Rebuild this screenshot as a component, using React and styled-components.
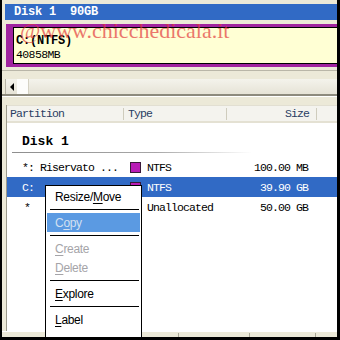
import React from 'react';
import styled, { createGlobalStyle } from 'styled-components';

const Global = createGlobalStyle`
  html, body { margin: 0; padding: 0; background: #000; }
  #root { width: 340px; height: 340px; }
`;

const Frame = styled.div`
  position: relative;
  width: 340px;
  height: 340px;
  box-sizing: border-box;
  border-left: 2px solid #000;
  border-right: 3px solid #000;
  border-bottom: 3px solid #000;
  background: #ece9d8;
  overflow: hidden;
  display: flex;
  flex-direction: column;
`;

const MapArea = styled.div`
  display: flex;
  flex-direction: column;
  padding-top: 4px;
`;

const DiskBar = styled.div`
  margin-left: 3px;
  height: 16px;
  line-height: 16px;
  background: #316ac5;
  color: #fff;
  font-family: "Liberation Mono", monospace;
  font-weight: bold;
  font-size: 12px;
  letter-spacing: -0.2px;
  padding-left: 9px;
  white-space: pre;
`;

const PartitionBox = styled.div`
  margin-top: 4px;
  margin-left: 4px;
  height: 43px;
  box-sizing: border-box;
  border-top: 3px solid #a0239f;
  border-bottom: 3px solid #a0239f;
  border-left: 7px solid #a0239f;
  display: flex;
`;

const PartitionInner = styled.div`
  flex: 1;
  border: 1px solid #000;
  border-right: none;
  background: #ffffd4;
  padding: 6px 0 0 2px;
  font-family: "Liberation Mono", monospace;
  line-height: 14px;
  color: #000;
`;

const PartLabel = styled.div`
  font-size: ${p => p.$bold ? '12px' : '11.5px'};
  font-weight: ${p => p.$bold ? 'bold' : 'normal'};
  letter-spacing: ${p => p.$bold ? '-0.2px' : '-0.6px'};
`;

const Watermark = styled.div`
  position: absolute;
  left: 18px;
  top: 20px;
  font-family: "Liberation Serif", "Times New Roman", serif;
  font-size: 22px;
  line-height: 22px;
  color: #e2383a;
  opacity: 0.68;
  pointer-events: none;
`;

const ScrollArea = styled.div`
  margin-top: 3px;
  border-top: 1px solid #b9b6a8;
  padding-top: 8px;
  border-bottom: 2px solid #8d8a7d;
  box-shadow: 0 1px 0 #fff;
`;

const Scrollbar = styled.div`
  margin-left: 3px;
  height: 15px;
  display: flex;
  background: linear-gradient(#f4f3ec, #e6e3d6);
`;

const ArrowBtn = styled.div`
  width: 11px;
  display: flex;
  align-items: center;
  justify-content: center;
  border-left: 1px solid #b7b4a6;
  &::before {
    content: "";
    width: 0;
    height: 0;
    border-top: 4px solid transparent;
    border-bottom: 4px solid transparent;
    border-right: 4px solid #000;
  }
`;

const Thumb = styled.div`
  width: 11px;
  background: #fdfdfb;
  border-right: 1px solid #d5d2c4;
`;

const ListPanel = styled.div`
  flex: 1;
  margin-top: 9px;
  margin-left: 4px;
  border-left: 1px solid #9c9a8c;
  background: #fff;
  display: flex;
  flex-direction: column;
  min-height: 0;
  font-family: "Liberation Mono", monospace;
  font-size: 11.5px;
  letter-spacing: -0.9px;
`;

const Columns = styled.div`
  display: grid;
  grid-template-columns: 117px 103px 90px 1fr;
  align-items: center;
`;

const HeaderRow = styled(Columns)`
  height: 18px;
  background: #f4f3ee;
  border-top: 1px solid #e2dfd2;
  border-bottom: 2px solid #e4e1d3;
  box-sizing: border-box;
  color: #2a3d63;
`;

const HeaderCell = styled.div`
  height: 12px;
  line-height: 12px;
  border-right: ${p => p.$last ? 'none' : '1px solid #cfccbd'};
  padding: ${p => p.$right ? '0 7px 0 0' : `0 0 0 ${p.$pad || 3}px`};
  text-align: ${p => p.$right ? 'right' : 'left'};
`;

const ListBody = styled.div`
  flex: 1;
  display: flex;
  flex-direction: column;
`;

const GroupTitle = styled.div`
  height: 29px;
  box-sizing: border-box;
  padding: 12px 0 0 15px;
  line-height: 14px;
  font-size: 13px;
  font-weight: bold;
  letter-spacing: 0;
  color: #000;
`;

const GroupRule = styled.div`
  margin-left: 5px;
  width: 240px;
  height: 1px;
  background: linear-gradient(to right, #8e8e8e 0%, #a8a8a8 60%, #ffffff 100%);
  margin-bottom: 4px;
`;

const Row = styled(Columns)`
  height: 20px;
  background: ${p => p.$selected ? '#316ac5' : 'transparent'};
  color: ${p => p.$selected ? '#fff' : '#000'};
`;

const Cell = styled.div`
  padding-left: ${p => p.$pad || 0}px;
  padding-right: ${p => p.$right ? 9 : 0}px;
  white-space: pre;
  display: flex;
  align-items: center;
  justify-content: ${p => p.$right ? 'flex-end' : 'flex-start'};
  gap: 6px;
`;

const Swatch = styled.span`
  width: 11px;
  height: 11px;
  box-sizing: border-box;
  border: 1px solid #3a1a3a;
  background: #b91cb6;
`;

const StatusBar = styled.div`
  height: 6px;
  display: flex;
  border-top: 1px solid #fff;
  box-sizing: border-box;
`;

const Pane = styled.div`
  width: ${p => p.$w}px;
  margin-top: 1px;
  border-right: ${p => p.$last ? 'none' : '1px solid #a9a696'};
  flex: ${p => p.$last ? 1 : 'none'};
`;

const Menu = styled.div`
  position: absolute;
  left: 43px;
  top: 185px;
  bottom: 0;
  width: 97px;
  box-sizing: border-box;
  background: #fff;
  border: 1px solid #000;
  border-bottom: none;
  padding-top: 1px;
  font-family: "Liberation Sans", Arial, sans-serif;
  font-size: 12px;
  letter-spacing: -0.3px;
`;

const MenuItem = styled.div`
  height: 19px;
  line-height: 20px;
  margin: 0 1px;
  padding-left: 8px;
  color: ${p => p.$disabled ? '#a5a4a8' : p.$active ? '#d3e0f1' : '#000'};
  background: ${p => p.$active ? '#5b9ae2' : 'transparent'};
  u { text-decoration-thickness: 1px; text-underline-offset: 2px; }
`;

const MenuSep = styled.div`
  height: 1px;
  background: #000;
  margin: 3px 2px 3px 4px;
`;

export default function App() {
  return (
    <Frame>
      <Global />
      <MapArea>
        <DiskBar>{'Disk 1  90GB'}</DiskBar>
        <PartitionBox>
          <PartitionInner>
            <PartLabel $bold>C:(NTFS)</PartLabel>
            <PartLabel>40858MB</PartLabel>
          </PartitionInner>
        </PartitionBox>
      </MapArea>
      <ScrollArea>
        <Scrollbar>
          <ArrowBtn />
          <Thumb />
        </Scrollbar>
      </ScrollArea>
      <ListPanel>
        <HeaderRow>
          <HeaderCell>Partition</HeaderCell>
          <HeaderCell $pad={4}>Type</HeaderCell>
          <HeaderCell $right>Size</HeaderCell>
          <HeaderCell $last />
        </HeaderRow>
        <ListBody>
          <GroupTitle>Disk 1</GroupTitle>
          <GroupRule />
          <Row>
            <Cell $pad={15}>*: Riservato ...</Cell>
            <Cell $pad={6}><Swatch />NTFS</Cell>
            <Cell $right>100.00 MB</Cell>
            <Cell />
          </Row>
          <Row $selected>
            <Cell $pad={15}>C:</Cell>
            <Cell $pad={6}><Swatch />NTFS</Cell>
            <Cell $right>39.90 GB</Cell>
            <Cell />
          </Row>
          <Row>
            <Cell $pad={17}>*</Cell>
            <Cell $pad={23}>Unallocated</Cell>
            <Cell $right>50.00 GB</Cell>
            <Cell />
          </Row>
        </ListBody>
      </ListPanel>
      <StatusBar>
        <Pane $w={176} />
        <Pane $w={70} />
        <Pane $w={65} />
        <Pane $last />
      </StatusBar>
      <Watermark>@www.chicchedicala.it</Watermark>
      <Menu>
        <MenuItem>Resize/<u>M</u>ove</MenuItem>
        <MenuSep />
        <MenuItem $active>C<u>o</u>py</MenuItem>
        <MenuSep />
        <MenuItem $disabled><u>C</u>reate</MenuItem>
        <MenuItem $disabled><u>D</u>elete</MenuItem>
        <MenuSep />
        <MenuItem><u>E</u>xplore</MenuItem>
        <MenuSep />
        <MenuItem><u>L</u>abel</MenuItem>
      </Menu>
    </Frame>
  );
}
